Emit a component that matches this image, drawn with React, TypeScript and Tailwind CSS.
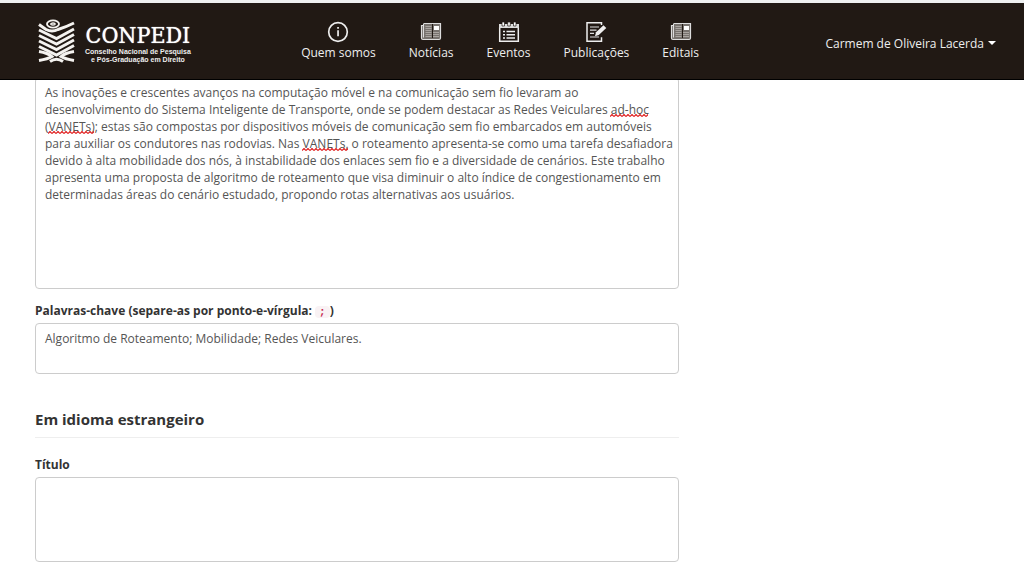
import React, { useState } from "react";

const abstractText = [
  "As inovações e crescentes avanços na computação móvel e na comunicação sem fio levaram ao",
  "desenvolvimento do Sistema Inteligente de Transporte, onde se podem destacar as Redes Veiculares ad-hoc",
  "(VANETs); estas são compostas por dispositivos móveis de comunicação sem fio embarcados em automóveis",
  "para auxiliar os condutores nas rodovias. Nas VANETs, o roteamento apresenta-se como uma tarefa desafiadora",
  "devido à alta mobilidade dos nós, à instabilidade dos enlaces sem fio e a diversidade de cenários. Este trabalho",
  "apresenta uma proposta de algoritmo de roteamento que visa diminuir o alto índice de congestionamento em",
  "determinadas áreas do cenário estudado, propondo rotas alternativas aos usuários.",
].join("\n");

function Emblem() {
  return (
    <svg width="37" height="44" viewBox="0 0 37 44" fill="none" stroke="#f5f3f0" aria-hidden="true">
      <g strokeWidth="2.9">
        <path d="M1 5.500L8 10.500Q14 13.500 20 10.500Q28 8 36 4" />
        <path d="M1 11L18.500 19.500L36 10" />
        <path d="M1 16.500L18.500 25L36 15.500" />
        <path d="M1 22L18.500 30.500L36 21" />
        <path d="M1 27.500L18.500 36L36 26.500" />
        <path d="M1 32.500Q10 34 14 37.500Q10 40 1 41.500" />
        <path d="M36 32.500Q27 34 23 37.500Q27 40 36 41.500" />
        <path d="M12 42.500Q18.500 38 25 42.500" />
      </g>
      <ellipse cx="15" cy="5" rx="6" ry="3.600" fill="#211914" strokeWidth="1.900" />
      <ellipse cx="15" cy="5" rx="2.200" ry="1" strokeWidth="1.400" />
    </svg>
  );
}

function InfoIcon() {
  return (
    <svg width="22" height="22" viewBox="0 0 22 22" aria-hidden="true">
      <circle cx="11" cy="11" r="9.300" fill="none" stroke="#eee" strokeWidth="1.700" />
      <path d="M10.200 6h1.700v1.800h-1.700zM10.200 9.200h1.700v6h-1.700z" fill="#eee" />
    </svg>
  );
}

function NewsIcon() {
  return (
    <svg width="22" height="22" viewBox="0 0 22 22" aria-hidden="true">
      <path d="M3.500 2.500h17v14.500q0 1.500-1.500 1.500H3q-1.500 0-1.500-1.500V4.500h2" fill="#77726e" stroke="#ddd" strokeWidth="1.200" />
      <path d="M3.500 3v13.500" stroke="#ddd" />
      <path d="M5.500 5.500h6M5.500 7.500h6M5.500 9.500h6M5.500 11.500h6M5.500 13.500h6M5.500 15.500h6M13 11.500h6M13 13.500h6M13 15.500h6" stroke="#aaa5a1" />
      <path d="M12.500 3v14" stroke="#211914" />
      <path d="M14 5h5v4h-5z" fill="#fff" />
    </svg>
  );
}

function CalendarIcon() {
  return (
    <svg width="22" height="22" viewBox="0 0 22 22" aria-hidden="true">
      <path d="M1.700 6v14.200h18.600V6" fill="none" stroke="#eee" strokeWidth="1.500" />
      <path d="M1 3h20v4H1z" fill="#ddd" />
      <path d="M4 1h2.500v4H4zM9.700 1h2.600v4H9.700zM15.500 1H18v4h-2.500z" fill="#fff" stroke="#211914" strokeWidth=".7" />
      <path d="M5 10.500h2M8.500 10.500H17M5 13.700h2M8.500 13.700H17M5 17h2M8.500 17H17" stroke="#eee" strokeWidth="1.500" />
    </svg>
  );
}

function PublishIcon() {
  return (
    <svg width="22" height="22" viewBox="0 0 22 22" aria-hidden="true">
      <path d="M16.500 4V1.700H2v18.600h14.500v-4" fill="none" stroke="#eee" strokeWidth="1.500" />
      <path d="M5 6h9M5 9.200h6.500M5 12.400h4M5 16h9" stroke="#ddd" strokeWidth="1.200" />
      <path d="M10 15.200l1-4 7.500-7 2.800 2.900-7.500 7z" fill="#eee" />
    </svg>
  );
}

const links = [
  { label: "Quem somos", icon: <InfoIcon /> },
  { label: "Notícias", icon: <NewsIcon /> },
  { label: "Eventos", icon: <CalendarIcon /> },
  { label: "Publicações", icon: <PublishIcon /> },
  { label: "Editais", icon: <NewsIcon /> },
];

function Squiggle({ className }: { className: string }) {
  return (
    <svg className={`pointer-events-none absolute h-[3px] ${className}`} aria-hidden="true">
      <defs>
        <pattern id="wave" width="4" height="3" patternUnits="userSpaceOnUse">
          <path d="M0 2.500L2 .5L4 2.500" fill="none" stroke="#e02020" strokeWidth="1.200" />
        </pattern>
      </defs>
      <rect width="100%" height="3" fill="url(#wave)" />
    </svg>
  );
}

const field =
  "block w-full resize-none rounded border border-[#ccc] bg-white py-[6px] pl-[9px] text-[12px] leading-[17px] text-[#555] outline-none focus:border-[#888]";

export default function App() {
  const [summary, setSummary] = useState(abstractText);
  const [keywords, setKeywords] = useState("Algoritmo de Roteamento; Mobilidade; Redes Veiculares.");
  const [title, setTitle] = useState("");

  return (
    <div className="min-h-screen bg-white font-['Open_Sans',sans-serif] text-[12px] leading-[17px] text-[#333]">
      <header className="relative z-10 flex h-20 items-center justify-between border-t-[3px] border-b border-t-[#eef0f0] border-b-black bg-[#211914] pt-1 pr-7 pl-[38px] text-[#eee]">
        <a href="#inicio" className="flex items-center gap-[10px] pb-1">
          <Emblem />
          <span className="flex flex-col items-center pt-1">
            <span className="font-['DejaVu_Serif_Condensed','Liberation_Serif',serif] text-[23px] leading-[26px] text-white [text-shadow:0_0_1px_#fff]">
              CONPEDI
            </span>
            <span className="text-center font-['Liberation_Sans',sans-serif] text-[7px] leading-[8px] font-bold">
              Conselho Nacional de Pesquisa
              <br />e Pós-Graduação em Direito
            </span>
          </span>
        </a>
        <nav className="mr-4 flex gap-[33px] pb-1">
          {links.map((link) => (
            <a key={link.label} href="#" className="flex flex-col items-center gap-px">
              {link.icon}
              {link.label}
            </a>
          ))}
        </nav>
        <button type="button" className="flex items-center gap-1">
          Carmem de Oliveira Lacerda
          <svg width="8" height="4" viewBox="0 0 8 4" aria-hidden="true">
            <path d="M0 0h8L4 4z" fill="#fff" />
          </svg>
        </button>
      </header>

      <main className="-mt-[3px] w-2/3 pr-1 pl-[35px]">
        <div className="relative">
          <textarea
            aria-label="Resumo"
            spellCheck={false}
            className={`${field} h-[212px]`}
            value={summary}
            onChange={(e) => setSummary(e.target.value)}
          />
          <Squiggle className="top-[37px] left-[575px] w-[38px]" />
          <Squiggle className="top-[54px] left-[13px] w-[46px]" />
          <Squiggle className="top-[71px] left-[267px] w-[46px]" />
        </div>

        <label htmlFor="keywords" className="mt-[13px] mb-1 block font-bold">
          Palavras-chave (separe-as por ponto-e-vírgula:{" "}
          <code className="rounded bg-[#f9f2f4] px-1 font-['Liberation_Mono',monospace] text-[11px] leading-none text-[#c7254e]">;</code>)
        </label>
        <textarea
          id="keywords"
          spellCheck={false}
          className={`${field} h-[51px]`}
          value={keywords}
          onChange={(e) => setKeywords(e.target.value)}
        />

        <h2 className="mt-9 mb-[18px] border-b border-[#eee] pb-2 text-[15px] leading-[19px] font-bold">
          Em idioma estrangeiro
        </h2>

        <label htmlFor="title" className="mb-1 block font-bold">
          Título
        </label>
        <textarea
          id="title"
          className={`${field} h-[85px]`}
          value={title}
          onChange={(e) => setTitle(e.target.value)}
        />
      </main>
    </div>
  );
}
